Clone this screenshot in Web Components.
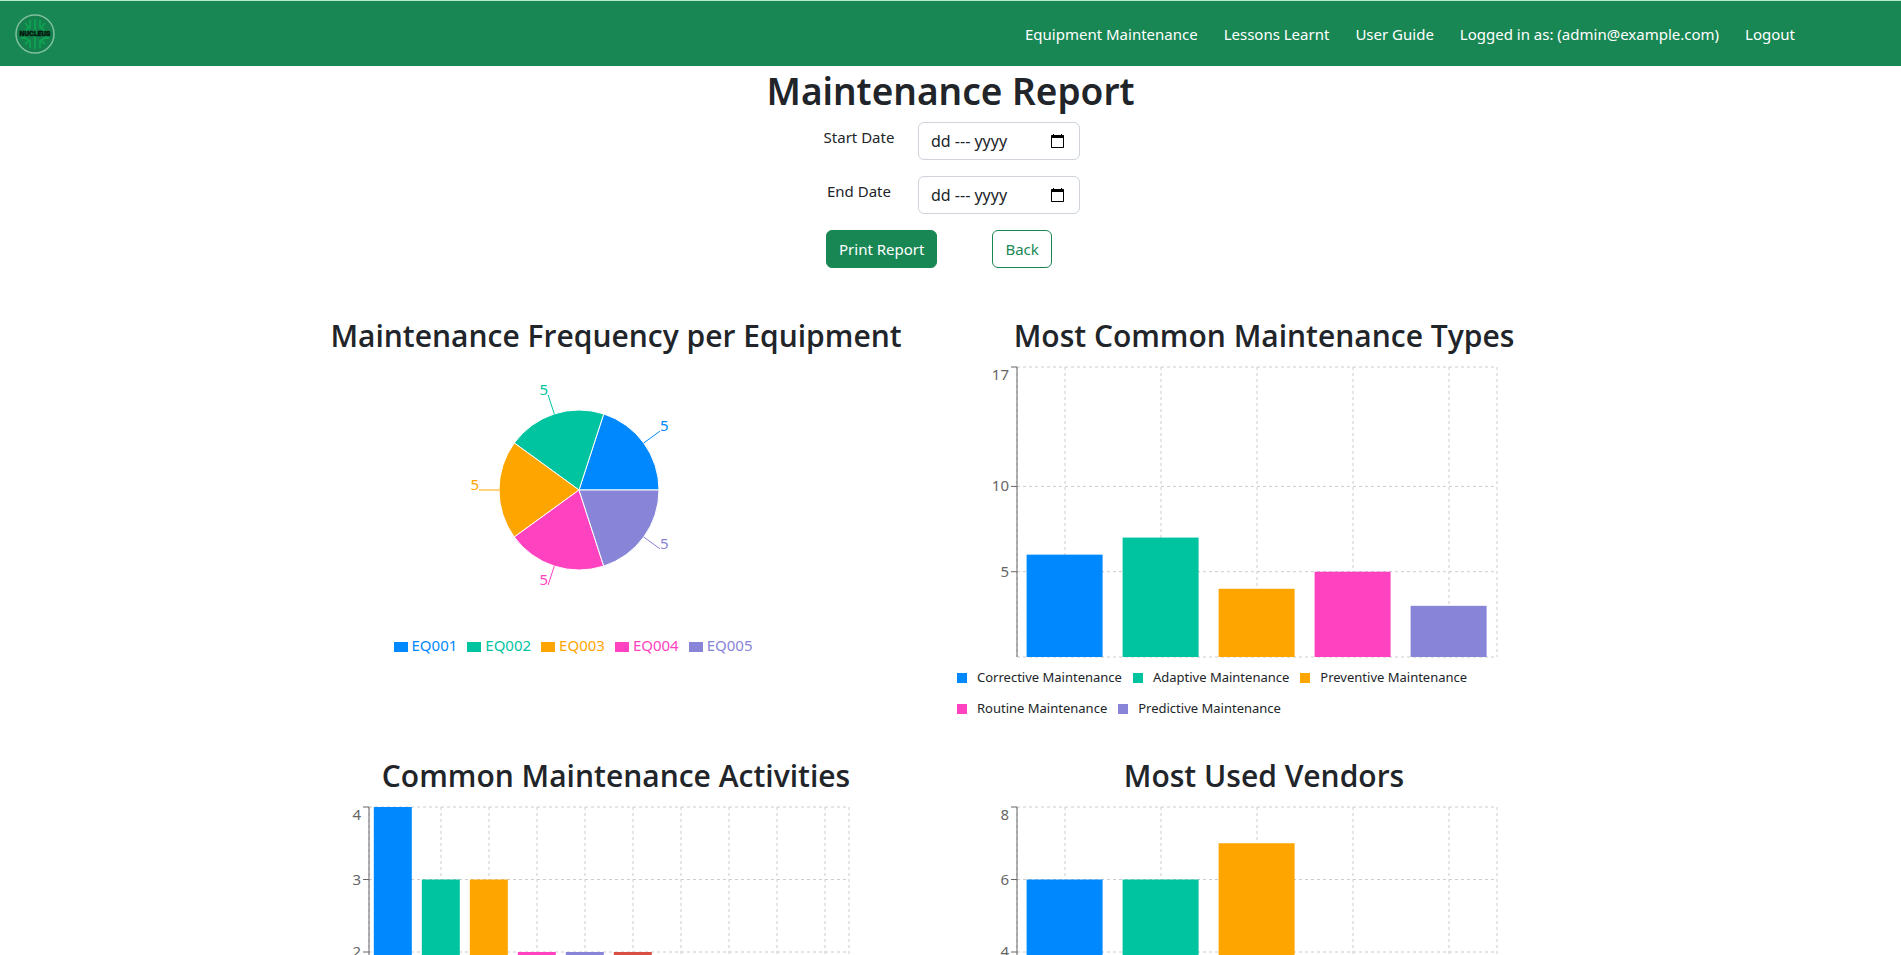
<!DOCTYPE html>
<html lang="en">
<head>
<meta charset="utf-8">
<meta name="viewport" content="width=device-width, initial-scale=1">
<title>Maintenance Report</title>
<style>
  body { margin: 0; background: #fff; color: #212529; font: 400 15px/24px "Noto Sans", "Open Sans", sans-serif; }
</style>
</head>
<body>
<report-page></report-page>

<template id="tpl-page">
  <style>
    :host { display: block; }
    h1 { margin: 0 0 6px; font: 600 37px/50px "Noto Sans", "Open Sans", sans-serif; text-align: center; }
    .charts { max-width: 1296px; margin: 49px auto 0; padding: 0 23px 0 2px; display: grid; grid-template-columns: 1fr 1fr; row-gap: 33px; }
  </style>
  <app-navbar>
    <nav-link>Equipment Maintenance</nav-link>
    <nav-link>Lessons Learnt</nav-link>
    <nav-link>User Guide</nav-link>
    <nav-link>Logged in as: (admin@example.com)</nav-link>
    <nav-link>Logout</nav-link>
  </app-navbar>
  <main>
    <h1>Maintenance Report</h1>
    <report-filter></report-filter>
    <div class="charts">
      <chart-card>
        <span slot="title">Maintenance Frequency per Equipment</span>
        <pie-chart data='[["EQ001",5],["EQ002",5],["EQ003",5],["EQ004",5],["EQ005",5]]'></pie-chart>
      </chart-card>
      <chart-card>
        <span slot="title">Most Common Maintenance Types</span>
        <bar-chart max="17" ticks="[17,10,5]" values="[6,7,4,5,3]"></bar-chart>
        <chart-legend labels='["Corrective Maintenance","Adaptive Maintenance","Preventive Maintenance","Routine Maintenance","Predictive Maintenance"]'></chart-legend>
      </chart-card>
      <chart-card>
        <span slot="title">Common Maintenance Activities</span>
        <bar-chart max="4" ticks="[4,3,2,1]" values="[4,3,3,2,2,2,1,1,1,1]"></bar-chart>
      </chart-card>
      <chart-card>
        <span slot="title">Most Used Vendors</span>
        <bar-chart max="8" ticks="[8,6,4,2]" values="[6,6,7,3,3]"></bar-chart>
      </chart-card>
    </div>
  </main>
</template>

<template id="tpl-navbar">
  <style>
    :host { display: block; background: #198754; border-top: 1px solid #b4ecd0; }
    nav { display: flex; align-items: center; justify-content: space-between; min-height: 65px; padding: 0 106px 0 15px; }
    .brand { display: block; line-height: 0; }
    .links { display: flex; gap: 26px; }
  </style>
  <nav>
    <a class="brand" href="#" aria-label="Home">
      <svg width="40" height="40" viewBox="0 0 40 40">
        <circle cx="20" cy="20" r="19" fill="#14804b" stroke="#7fc09f" stroke-width="1.5"/>
        <g fill="none" stroke="#0da352" stroke-width="1.8">
          <path d="M20 5v30M15 6v7l-5 4M25 6v7l5 4M10 9l4 5M30 9l-4 5M15 34v-7l-5-3M25 34v-7l5-3M10 30l5-4M30 30l-5-4M6 24h6M34 24h-6"/>
        </g>
        <text x="20" y="22" text-anchor="middle" font-family="Roboto, sans-serif" font-weight="900" font-size="7" fill="#04190f" stroke="#04190f" stroke-width=".4">NUCLEUS</text>
      </svg>
    </a>
    <div class="links"><slot></slot></div>
  </nav>
</template>

<template id="tpl-link">
  <style>
    :host { display: block; }
    a { color: #fff; text-decoration: none; }
  </style>
  <a href="#"><slot></slot></a>
</template>

<template id="tpl-filter">
  <style>
    :host { display: block; }
    form { display: grid; grid-template-columns: 76px 162px; column-gap: 21px; row-gap: 16px; justify-content: center; }
    label { padding-top: 3px; text-align: center; white-space: nowrap; }
    .field { position: relative; }
    input { box-sizing: border-box; width: 100%; height: 38px; padding: 6px 12px; border: 1px solid #ced4da; border-radius: 6px; background: #fff; color: #212529; font: inherit; font-size: 16px; display: block; }
    input::placeholder { color: #212529; opacity: 1; }
    .field svg { position: absolute; right: 16px; top: 12px; pointer-events: none; }
    .actions { grid-column: 1 / -1; display: flex; gap: 55px; padding-left: 5px; }
    button { height: 38px; padding: 0 12px; border: 1px solid #198754; border-radius: 6px; font: inherit; white-space: nowrap; }
    .primary { background: #198754; color: #fff; }
    .outline { background: #fff; color: #198754; }
  </style>
  <form>
    <label for="start">Start Date</label>
    <div class="field">
      <input id="start" type="text" placeholder="dd --- yyyy">
      <svg width="13" height="14" viewBox="0 0 13 14"><path fill="#000" fill-rule="evenodd" d="M2 0h1v1h7V0h1v1h1.500l.5.500V13.500l-.5.500H.5L0 13.500V1.500L.5 1H2zM1 4v9h11V4z"/></svg>
    </div>
    <label for="end">End Date</label>
    <div class="field">
      <input id="end" type="text" placeholder="dd --- yyyy">
      <svg width="13" height="14" viewBox="0 0 13 14"><path fill="#000" fill-rule="evenodd" d="M2 0h1v1h7V0h1v1h1.500l.5.500V13.500l-.5.500H.5L0 13.500V1.500L.5 1H2zM1 4v9h11V4z"/></svg>
    </div>
    <div class="actions">
      <button type="button" class="primary">Print Report</button>
      <button type="button" class="outline">Back</button>
    </div>
  </form>
</template>

<template id="tpl-card">
  <style>
    :host { display: block; }
    h2 { margin: 0 0 7px; font: 600 30px/38px "Open Sans", "Noto Sans", sans-serif; text-align: center; }
    .body { padding: 0 12px; }
  </style>
  <h2><slot name="title"></slot></h2>
  <div class="body"><slot></slot></div>
</template>

<script>
  const COLORS = ['#0088fe', '#00c49f', '#ffa500', '#ff42c0', '#8884d8', '#d94f43', '#82ca9d', '#a4de6c', '#d0ed57', '#ffc658'];

  const fromTemplate = id => class extends HTMLElement {
    constructor() {
      super();
      this.attachShadow({ mode: 'open' }).append(document.getElementById(id).content.cloneNode(true));
    }
  };

  class BarChart extends HTMLElement {
    connectedCallback() {
      const max = Number(this.getAttribute('max'));
      const ticks = JSON.parse(this.getAttribute('ticks'));
      const values = JSON.parse(this.getAttribute('values'));
      const left = 65, top = 5, width = 480, height = 290, bottom = top + height;
      const band = width / values.length;
      const y = v => bottom - height * v / max;
      const columns = [left, ...values.map((_, i) => left + band * (i + 0.5)), left + width];
      const grid = [...ticks, 0].map(t => `<line x1="${left}" x2="${left + width}" y1="${y(t)}" y2="${y(t)}"/>`).join('')
        + columns.map(x => `<line x1="${x}" x2="${x}" y1="${top}" y2="${bottom}"/>`).join('');
      const bars = values.map((v, i) =>
        `<rect x="${left + band * (i + 0.1)}" y="${y(v)}" width="${Math.floor(band * 0.8)}" height="${bottom - y(v)}" fill="${COLORS[i]}"/>`).join('');
      const marks = ticks.map(t => `<line x1="${left - 6}" x2="${left}" y1="${y(t)}" y2="${y(t)}"/>`).join('');
      const labels = ticks.map(t => `<text x="${left - 8}" y="${y(t) + (t === max ? 13 : 5)}">${t}</text>`).join('');
      this.attachShadow({ mode: 'open' }).innerHTML = `
        <style>
          :host { display: block; }
          svg { display: block; }
          .grid { stroke: #ccc; stroke-dasharray: 3 3; }
          .axis { stroke: #666; }
          text { fill: #666; text-anchor: end; }
        </style>
        <svg width="550" height="300" viewBox="0 0 550 300">
          <g class="grid">${grid}</g>${bars}
          <g class="axis"><line x1="${left}" x2="${left}" y1="${top}" y2="${bottom}"/>${marks}</g>${labels}
        </svg>`;
    }
  }

  class PieChart extends HTMLElement {
    connectedCallback() {
      const data = JSON.parse(this.getAttribute('data'));
      const total = data.reduce((sum, d) => sum + d[1], 0);
      const cx = 275, cy = 128, r = 80;
      const at = (radius, turn) => [cx + radius * Math.cos(turn * 2 * Math.PI), cy - radius * Math.sin(turn * 2 * Math.PI)];
      let sum = 0, slices = '', labels = '';
      data.forEach(([, value], i) => {
        const a = sum / total, b = (sum += value) / total, mid = (a + b) / 2;
        slices += `<path d="M${cx} ${cy}L${at(r, a)}A${r} ${r} 0 0 0 ${at(r, b)}Z" fill="${COLORS[i]}" stroke="#fff"/>`;
        const [x, y] = at(100, mid);
        labels += `<path d="M${at(r, mid)}L${x} ${y}" fill="none" stroke="${COLORS[i]}"/>
          <text x="${x}" y="${y}" fill="${COLORS[i]}" text-anchor="${x > cx ? 'start' : 'end'}">${value}</text>`;
      });
      this.attachShadow({ mode: 'open' }).innerHTML = `
        <style>
          :host { display: block; width: 550px; }
          svg { display: block; }
          ul { display: flex; justify-content: center; gap: 10px; margin: 0; padding: 0 12px 0 0; list-style: none; }
          li { display: flex; align-items: center; gap: 4px; }
          i { width: 14px; height: 10px; margin-top: 4px; }
        </style>
        <svg width="550" height="271" viewBox="0 0 550 271">${slices}${labels}</svg>
        <ul>${data.map((d, i) => `<li style="color:${COLORS[i]}"><i style="background:${COLORS[i]}"></i><span>${d[0]}</span></li>`).join('')}</ul>`;
    }
  }

  class ChartLegend extends HTMLElement {
    connectedCallback() {
      const labels = JSON.parse(this.getAttribute('labels'));
      this.attachShadow({ mode: 'open' }).innerHTML = `
        <style>
          :host { display: block; font-size: 13px; line-height: 31px; }
          ul { display: flex; flex-wrap: wrap; column-gap: 11px; margin: 0; padding: 0 5px; list-style: none; }
          li { display: flex; align-items: center; gap: 10px; }
          i { width: 10px; height: 10px; }
        </style>
        <ul>${labels.map((l, i) => `<li><i style="background:${COLORS[i]}"></i><span>${l}</span></li>`).join('')}</ul>`;
    }
  }

  customElements.define('nav-link', fromTemplate('tpl-link'));
  customElements.define('app-navbar', fromTemplate('tpl-navbar'));
  customElements.define('report-filter', fromTemplate('tpl-filter'));
  customElements.define('chart-card', fromTemplate('tpl-card'));
  customElements.define('bar-chart', BarChart);
  customElements.define('pie-chart', PieChart);
  customElements.define('chart-legend', ChartLegend);
  customElements.define('report-page', fromTemplate('tpl-page'));
</script>
</body>
</html>
